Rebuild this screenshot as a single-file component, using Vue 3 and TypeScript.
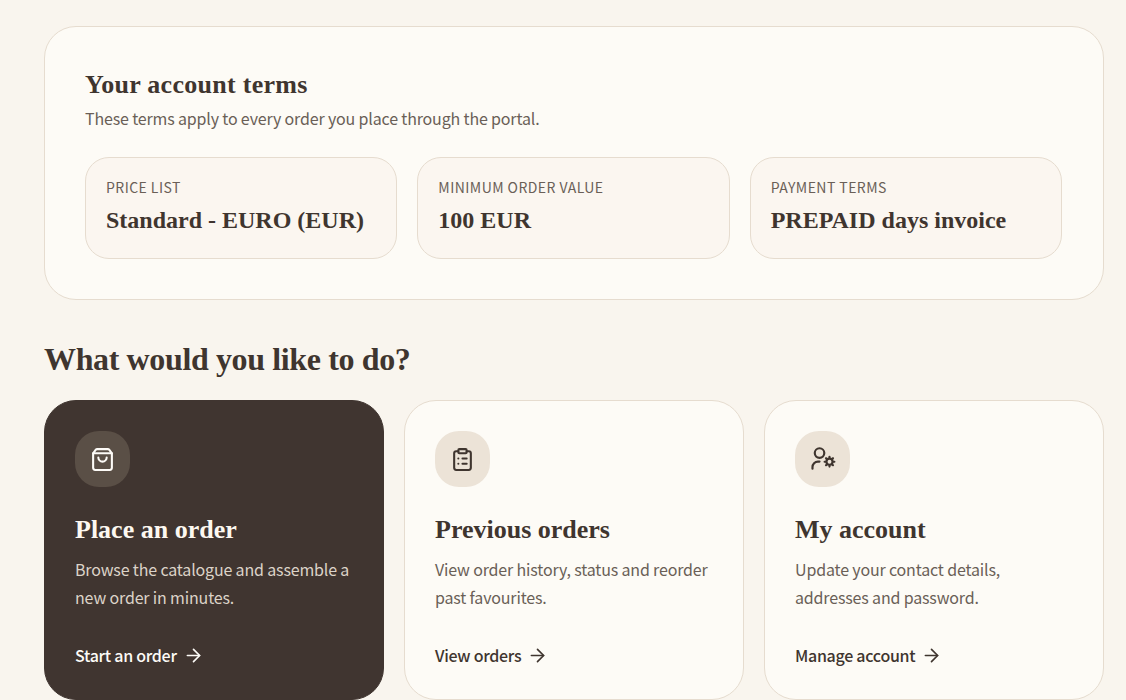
<script setup lang="ts">
interface Term { label: string; value: string }
const terms: Term[] = [
  { label: 'PRICE LIST', value: 'Standard - EURO (EUR)' },
  { label: 'MINIMUM ORDER VALUE', value: '100 EUR' },
  { label: 'PAYMENT TERMS', value: 'PREPAID days invoice' },
]
</script>

<template>
  <main class="page">
    <section class="terms">
      <h2 class="terms-title">Your account terms</h2>
      <p class="terms-sub">These terms apply to every order you place through the portal.</p>
      <div class="term-grid">
        <div v-for="t in terms" :key="t.label" class="term">
          <div class="term-label">{{ t.label }}</div>
          <div class="term-value">{{ t.value }}</div>
        </div>
      </div>
    </section>

    <h1 class="question">What would you like to do?</h1>

    <div class="actions">
      <a class="action dark">
        <span class="icon">
          <svg viewBox="0 0 24 24" width="25" height="25" fill="none" stroke="currentColor" stroke-width="2" stroke-linecap="round" stroke-linejoin="round">
            <path d="M7 2h10a2 2 0 0 1 1.6.8L21 6v14a2 2 0 0 1-2 2H5a2 2 0 0 1-2-2V6l2.4-3.2A2 2 0 0 1 7 2z" />
            <path d="M3 6h18" />
            <path d="M16 10a4 4 0 0 1-8 0" />
          </svg>
        </span>
        <h3 class="action-title">Place an order</h3>
        <p class="action-desc">Browse the catalogue and assemble a new order in minutes.</p>
        <span class="action-link">Start an order
          <svg viewBox="0 0 24 24" width="21" height="21" fill="none" stroke="currentColor" stroke-width="1.9" stroke-linecap="round" stroke-linejoin="round"><path d="M5 12h14" /><path d="m12 5 7 7-7 7" /></svg>
        </span>
      </a>

      <a class="action">
        <span class="icon">
          <svg viewBox="0 0 24 24" width="25" height="25" fill="none" stroke="currentColor" stroke-width="2" stroke-linecap="round" stroke-linejoin="round">
            <rect x="8" y="2" width="8" height="4" rx="1" />
            <path d="M16 4h2a2 2 0 0 1 2 2v14a2 2 0 0 1-2 2H6a2 2 0 0 1-2-2V6a2 2 0 0 1 2-2h2" />
            <path d="M12 11h4" /><path d="M12 16h4" /><path d="M8 11h.01" /><path d="M8 16h.01" />
          </svg>
        </span>
        <h3 class="action-title">Previous orders</h3>
        <p class="action-desc">View order history, status and reorder past favourites.</p>
        <span class="action-link">View orders
          <svg viewBox="0 0 24 24" width="21" height="21" fill="none" stroke="currentColor" stroke-width="1.9" stroke-linecap="round" stroke-linejoin="round"><path d="M5 12h14" /><path d="m12 5 7 7-7 7" /></svg>
        </span>
      </a>

      <a class="action">
        <span class="icon">
          <svg viewBox="0 0 24 24" width="26" height="26" fill="none" stroke="currentColor" stroke-width="2" stroke-linecap="round" stroke-linejoin="round">
            <path d="M2.3 21v-1.6a5 5 0 0 1 5-5h1.5" />
            <circle cx="8.8" cy="6.5" r="4.4" />
            <circle cx="18" cy="14.5" r="2.8" />
            <path d="M18 10v1M18 18v1M13.5 14.5h1M21.5 14.5h1M14.8 11.3l.7.7M20.5 17l.7.7M14.8 17.7l.7-.7M20.5 12l.7-.7" />
          </svg>
        </span>
        <h3 class="action-title">My account</h3>
        <p class="action-desc">Update your contact details, addresses and password.</p>
        <span class="action-link">Manage account
          <svg viewBox="0 0 24 24" width="21" height="21" fill="none" stroke="currentColor" stroke-width="1.9" stroke-linecap="round" stroke-linejoin="round"><path d="M5 12h14" /><path d="m12 5 7 7-7 7" /></svg>
        </span>
      </a>
    </div>
  </main>
</template>

<style>
html, body { margin: 0; background: #f9f5ee; overflow: hidden; }
</style>

<style scoped>
.page {
  box-sizing: border-box;
  width: 1126px;
  height: 700px;
  overflow: hidden;
  padding: 26px 22px 0 44px;
  background: #f9f5ee;
  color: #3f352f;
  font-family: "Noto Sans CJK SC", "Open Sans", sans-serif;
}
.terms {
  box-sizing: border-box;
  height: 274px;
  padding: 40px 41px 40px 40px;
  background: #fdfbf6;
  border: 1px solid #e6dccf;
  border-radius: 32px;
}
.terms-title, .question, .action-title, .term-value {
  font-family: "Liberation Serif", serif;
  font-weight: 700;
  margin: 0;
}
.terms-title { font-size: 26px; line-height: 36px; letter-spacing: 0.28px; }
.terms-sub { margin: 0 0 18px; font-size: 16px; line-height: 30px; height: 36px; letter-spacing: -0.16px; color: #6a5f57; }
.term-grid { display: grid; grid-template-columns: repeat(3, 1fr); gap: 20px; }
.term {
  box-sizing: border-box;
  height: 102px;
  padding: 19px 20px;
  background: #fbf6f0;
  border: 1px solid #e6dccf;
  border-radius: 24px;
}
.term-label { font-size: 14px; line-height: 20px; letter-spacing: 0.45px; color: #6a5f57; }
.term-value { font-size: 24px; line-height: 36px; margin-top: 5px; }
.question { font-size: 32px; line-height: 40px; margin: 39px 0 21px; letter-spacing: -0.37px; }
.actions { display: grid; grid-template-columns: repeat(3, 1fr); gap: 20px; }
.action {
  box-sizing: border-box;
  height: 300px;
  padding: 30px 30px 32px;
  display: flex;
  flex-direction: column;
  align-items: flex-start;
  background: #fdfbf6;
  border: 1px solid #e6dccf;
  border-radius: 32px;
}
.icon {
  width: 55px;
  height: 56px;
  border-radius: 24px;
  display: flex;
  align-items: center;
  justify-content: center;
  background: #ece3d7;
  color: #3f352f;
}
.action-title { font-size: 26px; line-height: 36px; margin-top: 25px; }
.action-desc { margin: 7px 0 0; font-size: 16px; line-height: 28px; letter-spacing: -0.16px; color: #6a5f57; }
.action-link {
  display: flex;
  align-items: center;
  gap: 6px;
  margin-top: auto;
  font-size: 16px;
  line-height: 24px;
  font-weight: 500;
  letter-spacing: -0.28px;
  color: #3f352f;
}
.dark { background: #403530; border-color: #403530; }
.dark .icon { background: #5a4f46; color: #fdfbf7; }
.dark .action-title { color: #fdf8f0; }
.dark .action-desc { color: #dcd3c8; }
.dark .action-link { color: #fdfbf7; }
</style>
